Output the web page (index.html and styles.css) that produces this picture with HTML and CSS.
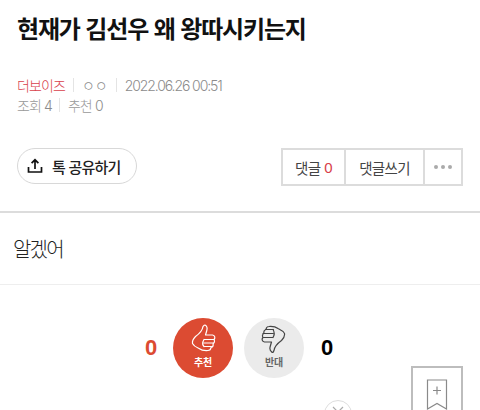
FILE: index.html
```html
<!DOCTYPE html>
<html lang="ko">
<head>
<meta charset="utf-8">
<title>현재가 김선우 왜 왕따시키는지</title>
<link rel="stylesheet" href="styles.css">
</head>
<body>
<header class="head">
  <h1 class="title">현재가 김선우 왜 왕따시키는지</h1>
  <div class="meta">
    <span class="board">더보이즈</span><i class="sep"></i><span class="author">ㅇㅇ</span><i class="sep"></i><span class="date">2022.06.26 00:51</span>
  </div>
  <div class="meta meta2">
    <span>조회 <b class="n">4</b></span><i class="sep sep2"></i><span>추천 <b class="n">0</b></span>
  </div>
  <div class="actions">
    <button class="share">
      <svg class="share-ico" width="16" height="16" viewBox="0 0 16 16" fill="none" stroke="#111" stroke-width="1.7"><path d="M8 11V2M4.600 5.200 8 1.800l3.400 3.400M1.500 9v5h13V9"/></svg>
      <span>톡 공유하기</span>
    </button>
    <div class="btns">
      <span class="btn b1">댓글 <em>0</em></span>
      <span class="btn b2">댓글쓰기</span>
      <span class="btn b3"><i></i><i></i><i></i></span>
    </div>
  </div>
</header>
<main class="body">
  <p class="text">알겠어</p>
</main>
<section class="vote">
  <span class="num up">0</span>
  <div class="circle red">
    <svg width="26" height="29" viewBox="0 0 26 29" fill="none" stroke="#fff" stroke-width="1.200" stroke-linejoin="round" stroke-linecap="round"><path d="M15 1c2 1 2.500 3 1.800 5.500L15.500 11h7c2.500.5 3 3 1.500 4.500 1 1.500.5 3.500-1 4.200.5 1.800-.3 3.300-2 3.800-.2 2-1.500 3-3 3-4 .3-7-.5-9-2-2-1-5-2-6.500-5-.5-3 1-5 3-7 3.500-2.500 7-6 7.500-10C13.500 2 14 1 15 1Z"/><path d="M14 15.500h10M14 19h9.500M14 22.500h7.500M14 15.500c-1.500 2.500-1.500 5.500 0 7"/></svg>
    <span>추천</span>
  </div>
  <div class="circle gray">
    <svg width="26" height="29" viewBox="0 0 26 29" fill="none" stroke="#444" stroke-width="1.200" stroke-linejoin="round" stroke-linecap="round"><path d="M11 28c-2-1-2.500-3-1.800-5.500L10.500 18h-7c-2.500-.5-3-3-1.500-4.500-1-1.500-.5-3.500 1-4.200-.5-1.800.3-3.300 2-3.800.2-2 1.500-3 3-3 4-.3 7 .5 9 2 2 1 5 2 6.500 5 .5 3-1 5-3 7-3.500 2.500-7 6-7.500 10-.5 1.500-1 2.500-2 2.500Z"/><path d="M2 9.500h10M2.500 13.500h9.500M4.500 5.500h8M12 5.500c1.500 2.500 1.500 5.500 0 8"/></svg>
    <span>반대</span>
  </div>
  <span class="num down">0</span>
</section>
<div class="scrap" aria-label="스크랩">
  <svg width="22" height="32" viewBox="0 0 22 32" fill="none" stroke="#8a8a8a" stroke-width="1.200"><path d="M1.500 1h19v29L11 24.500 1.500 30Z"/><path d="M11 7.500v8M7 11.500h8"/></svg>
</div>
<div class="close-circle">
  <svg width="14" height="8" viewBox="0 0 14 8" fill="none" stroke="#aaa" stroke-width="1.200"><path d="M2 1l5 5 5-5"/></svg>
</div>
</body>
</html>
```

FILE: styles.css
```css
* { box-sizing: border-box; }
html, body { margin: 0; height: 410px; overflow: hidden; background: #fff; }
body { position: relative; font-family: "Noto Sans CJK KR", "Liberation Sans", sans-serif; color: #111; }
.head { padding: 0 17px; height: 213px; border-bottom: 2px solid #dcdcdc; margin: 0; }
.title { margin: 0; padding-top: 10px; font-size: 24px; line-height: 36px; font-weight: 700; letter-spacing: -1.150px; color: #111; }
.meta { margin-top: 30px; display: flex; align-items: center; height: 18px; font-size: 14px; letter-spacing: -.9px; color: #999; font-weight: 300; }
.meta2 { margin-top: 1px; height: 20px; color: #999; }
.n { font-family: Inter, sans-serif; font-weight: 300; font-size: 14px; color: #8c8c8c; }
.board { color: #d8404a; }
.author { letter-spacing: 0; font-size: 14px; color: #888; }
.date { color: #8c8c8c; font-family: Inter, sans-serif; font-size: 14px; letter-spacing: -1.100px; }
.sep { display: block; width: 1px; height: 14px; background: #e4e4e4; margin: 0 8px; }
.sep2 { margin: 0 8px 0 7px; }
.actions { display: flex; justify-content: space-between; align-items: flex-start; margin-top: 33px; width: 446px; }
.share { display: flex; align-items: center; gap: 9px; width: 120px; height: 36px; padding: 0 0 0 9px; border: 1px solid #d8d8d8; border-radius: 18px; background: #fff; font: 500 15px "Noto Sans CJK KR", sans-serif; letter-spacing: -.8px; color: #222; }
.share-ico { flex: none; }
.btns { display: flex; height: 38px; border: 2px solid #dcdcdc; }
.btn { display: flex; align-items: center; justify-content: center; font-size: 14.500px; font-weight: 400; letter-spacing: -.7px; color: #444; border-right: 2px solid #dcdcdc; gap: 4px; }
.btn em { font-style: normal; color: #d8404a; font-size: 15px; font-family: "Liberation Sans", sans-serif; }
.b1 { width: 63px; }
.b2 { width: 79px; }
.b3 { width: 36px; border-right: 0; gap: 3px; }
.b3 i { display: block; width: 4px; height: 4px; border-radius: 50%; background: #aaa; }
.body { height: 72px; padding: 0 13px; border-bottom: 1px solid #eee; }
.text { margin: 0; padding-top: 20px; font-size: 20px; line-height: 32px; font-weight: 300; letter-spacing: -1.800px; color: #222; }
.vote { display: flex; align-items: center; justify-content: center; padding-top: 33px; margin-left: -2px; }
.circle { width: 60px; height: 60px; border-radius: 50%; display: flex; flex-direction: column; align-items: center; font-size: 10px; font-weight: 700; letter-spacing: -.3px; }
.circle svg { margin-top: 6px; flex: none; }
.circle span { margin-top: 2px; line-height: 14px; }
.red { background: #dc4b32; color: #fff; margin-left: 14px; }
.gray { background: #ebebeb; color: #666; margin-left: 11px; }
.num { width: 16px; text-align: center; font-family: "Liberation Sans", sans-serif; font-size: 22px; font-weight: 700; }
.up { color: #dc4b32; }
.down { color: #000; margin-left: 15px; }
.scrap { position: absolute; left: 411px; top: 366px; width: 52px; height: 52px; border: 2px solid #bdbdbd; background: #fff; padding: 11px 0 0 13px; }
.close-circle { position: absolute; left: 324px; top: 400px; width: 28px; height: 28px; border-radius: 50%; border: 1px solid #ddd; display: flex; justify-content: center; padding-top: 5px; }
```
